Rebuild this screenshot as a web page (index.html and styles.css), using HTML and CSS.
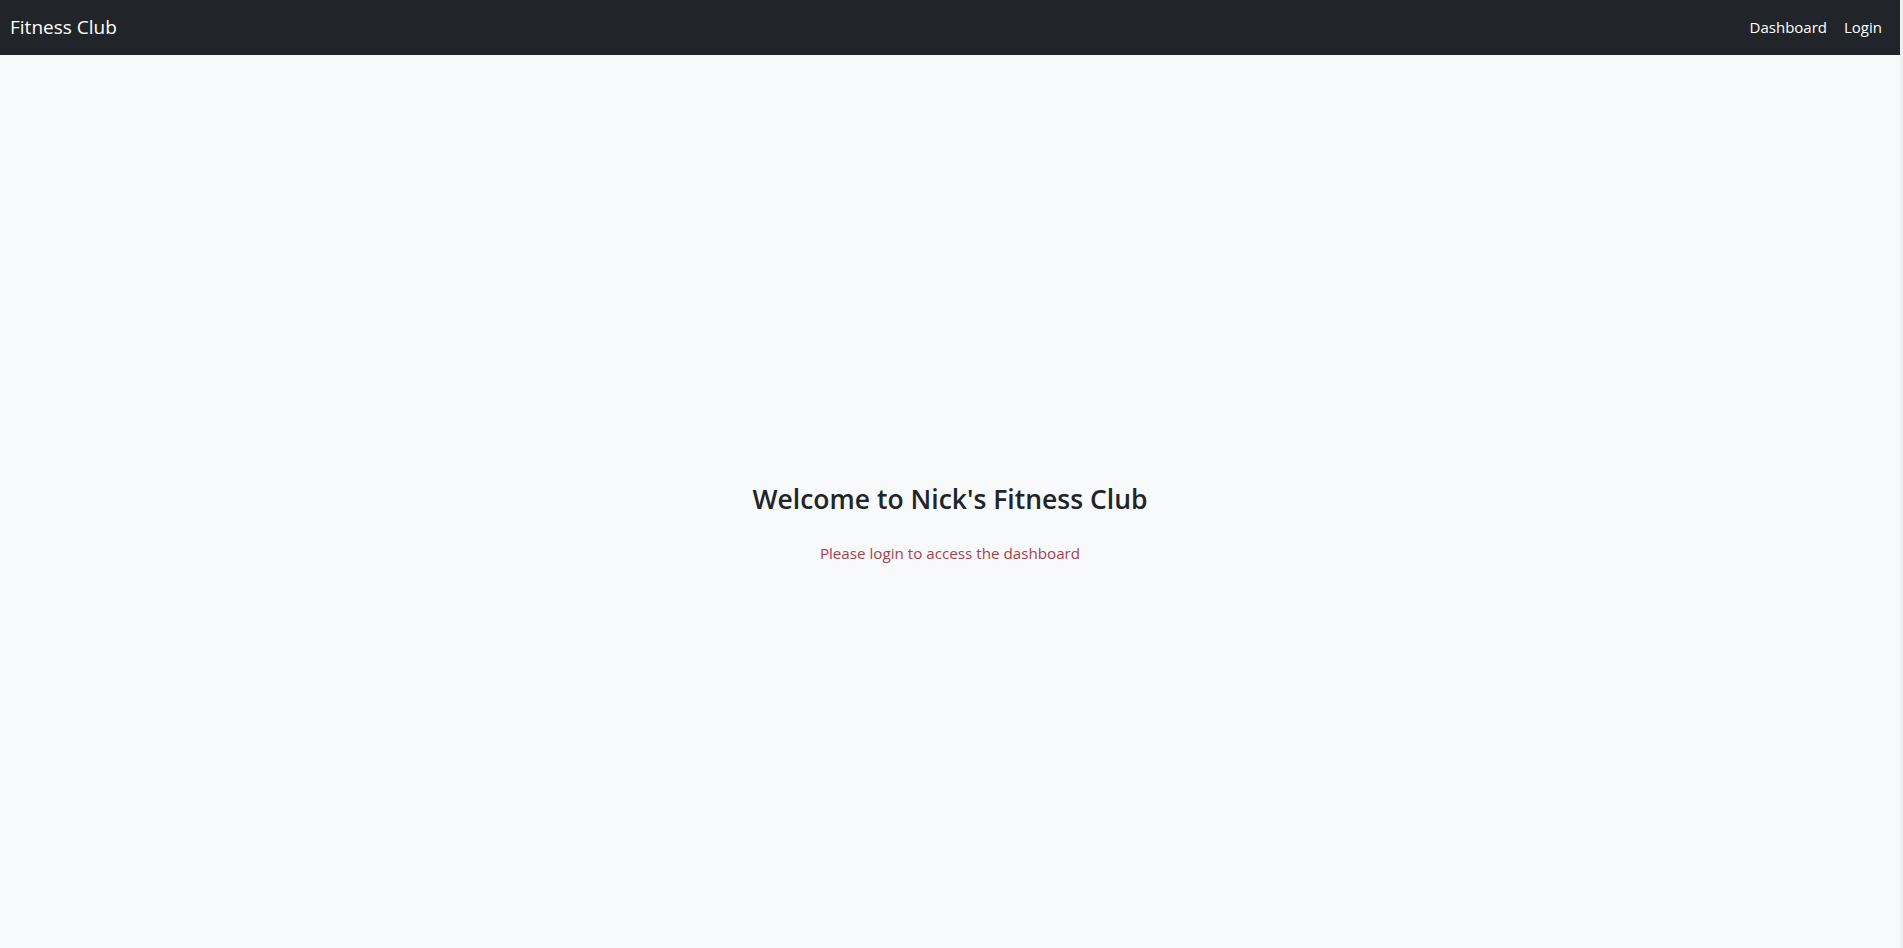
FILE: index.html
```html
<!DOCTYPE html>
<html lang="en">
<head>
<meta charset="utf-8">
<title>Fitness Club</title>
<link rel="stylesheet" href="styles.css">
</head>
<body>
<div class="page">
  <nav class="navbar">
    <a class="brand" href="#">Fitness Club</a>
    <ul class="nav-links">
      <li><a href="#">Dashboard</a></li>
      <li><a href="#">Login</a></li>
    </ul>
  </nav>
  <main class="hero">
    <h2 class="title">Welcome to Nick's Fitness Club</h2>
    <p class="notice">Please login to access the dashboard</p>
  </main>
</div>
</body>
</html>
```
FILE: styles.css
```css
html {
  background: #eef0f1;
}
body {
  margin: 0 3px 0 0;
  background: #f8f9fa;
  font-family: "Open Sans", "Noto Sans", sans-serif;
  color: #212529;
}
.page {
  display: flex;
  flex-direction: column;
  min-height: 948px;
}
.navbar {
  height: 55px;
  background: #212529;
  display: flex;
  align-items: center;
  justify-content: space-between;
  padding: 0 18px 0 10px;
  box-sizing: border-box;
}
.brand {
  color: #fff;
  text-decoration: none;
  font-size: 19px;
  margin-top: -2px;
}
.nav-links {
  list-style: none;
  margin: -2px 0 0;
  padding: 0;
  display: flex;
  gap: 17px;
}
.nav-links a {
  color: #fff;
  text-decoration: none;
  font-size: 15px;
}
.hero {
  flex: 1;
  display: flex;
  flex-direction: column;
  align-items: center;
  justify-content: center;
  padding-top: 40px;
}
.title {
  margin: 0 0 15px;
  font-size: 26.5px;
  font-weight: 600;
}
.notice {
  margin: 11px 0 0;
  font-size: 15.2px;
  color: #a8404f;
}
```
